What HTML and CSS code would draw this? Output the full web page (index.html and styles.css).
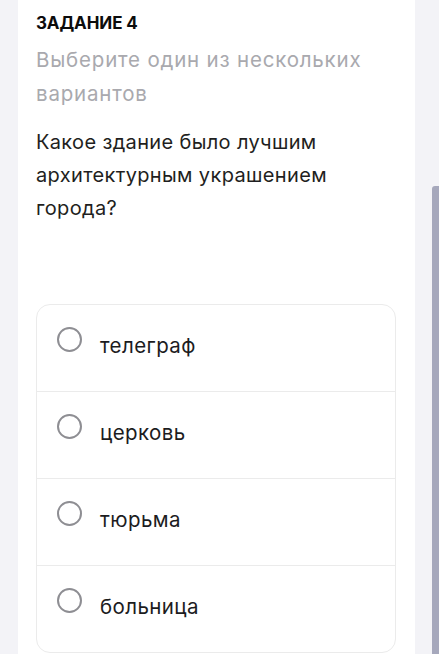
FILE: index.html
```html
<!DOCTYPE html>
<html lang="ru">
<head>
<meta charset="utf-8">
<link rel="stylesheet" href="styles.css">
</head>
<body>
<div class="page">
  <main class="card">
    <h1 class="task-title">ЗАДАНИЕ 4</h1>
    <p class="task-hint">Выберите один из нескольких вариантов</p>
    <p class="question">Какое здание было лучшим архитектурным украшением города?</p>
    <ul class="options">
      <li class="option"><span class="radio"></span><span class="option-text">телеграф</span></li>
      <li class="option"><span class="radio"></span><span class="option-text">церковь</span></li>
      <li class="option"><span class="radio"></span><span class="option-text">тюрьма</span></li>
      <li class="option"><span class="radio"></span><span class="option-text">больница</span></li>
    </ul>
  </main>
</div>
<div class="scrollbar"></div>
</body>
</html>
```
FILE: styles.css
```css
html, body {
  margin: 0;
  padding: 0;
  height: 100%;
  overflow: hidden;
}
body {
  background: #f3f3f7;
  font-family: Inter, "Noto Sans", sans-serif;
  color: #1c1c1e;
}
.page {
  display: flex;
  padding-left: 18px;
}
.card {
  width: 397px;
  box-sizing: border-box;
  background: #ffffff;
  padding: 12px 18px 0 18px;
  min-height: 654px;
}
.task-title {
  margin: 0;
  font-size: 17px;
  line-height: 22px;
  font-weight: 700;
  letter-spacing: -0.1px;
  color: #0c0c0c;
}
.task-hint {
  margin: 9px 0 0 0;
  font-size: 20.5px;
  line-height: 34px;
  color: #a9a9ae;
  letter-spacing: 0.8px;
}
.question {
  margin: 15px 0 0 0;
  font-size: 20px;
  line-height: 33px;
  color: #1f1f21;
  letter-spacing: 0.35px;
  padding-right: 60px;
}
.options {
  list-style: none;
  margin: 79px 0 0 0;
  padding: 0;
  width: 360px;
  box-sizing: border-box;
  border: 1px solid #ebebeb;
  border-radius: 14px;
}
.option {
  display: flex;
  align-items: flex-start;
  height: 86px;
  box-sizing: border-box;
  padding: 22px 20px;
  gap: 18px;
}
.option + .option {
  border-top: 1px solid #ebebeb;
  height: 87px;
}
.radio {
  width: 25px;
  height: 25px;
  box-sizing: border-box;
  border: 2.5px solid #8e8e93;
  border-radius: 50%;
  flex: none;
}
.option-text {
  margin-top: 6px;
  font-size: 20.5px;
  line-height: 25px;
  letter-spacing: 0.4px;
}
.scrollbar {
  position: absolute;
  top: 186px;
  right: 0;
  width: 7px;
  height: 480px;
  background: #a6a8bc;
  border-radius: 3px 0 0 0;
}
```
